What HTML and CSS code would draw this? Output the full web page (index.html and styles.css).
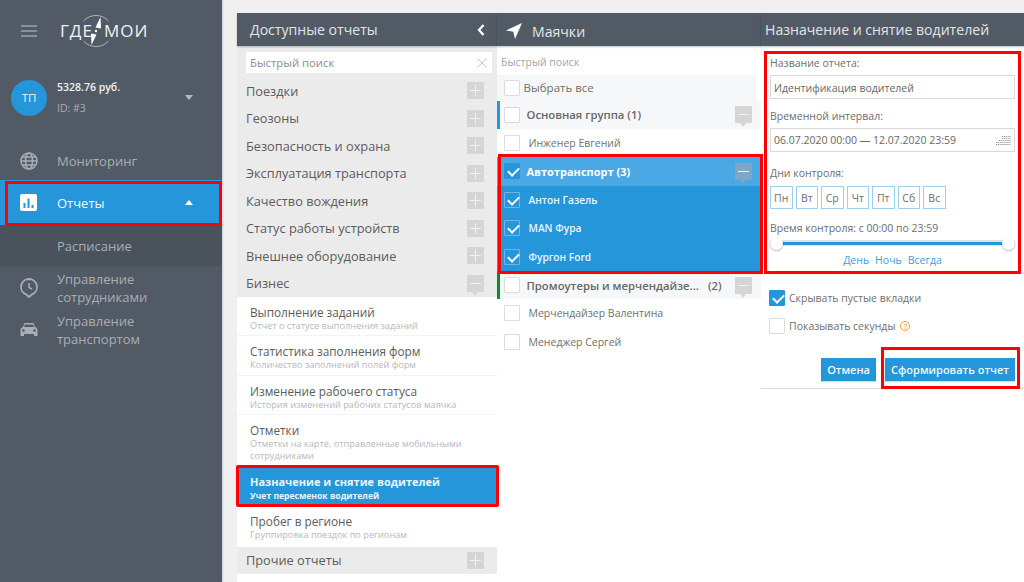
FILE: index.html
```html
<!DOCTYPE html>
<html lang="ru">
<head>
<meta charset="utf-8">
<title>Отчеты</title>
<link rel="stylesheet" href="styles.css">
</head>
<body>
<div class="app">
  <aside class="sidebar">
    <div class="brand">
      <svg class="burger" viewBox="0 0 16 12" width="16" height="12"><path d="M0 1h16M0 6h16M0 11h16" stroke="#c3c7cc" stroke-width="1.2"/></svg>
      <div class="logo">
        <span>ГДЕ</span>
        <svg class="compass" viewBox="0 0 34 36" width="34" height="36"><path d="M4.500 8A16.800 16.800 0 0 1 29.500 8M29.500 28A16.800 16.800 0 0 1 4.500 28" fill="none" stroke="#b7bbc0" stroke-width=".9"/><path d="M21.500 4l.5 11.500-5.500-1zM12.500 32l-.5-11.500 5.500 1z" fill="#fff"/><circle cx="17" cy="18" r="1.200" fill="#fff"/></svg>
        <span class="logo-b">МОИ</span>
      </div>
    </div>
    <div class="account">
      <div class="avatar">ТП</div>
      <div class="acc-text">
        <div class="balance">5328.76 руб.</div>
        <div class="acc-id">ID: #3</div>
      </div>
      <span class="caret-down"></span>
    </div>
    <nav class="nav">
      <div class="nav-item">
        <svg viewBox="0 0 18 18" width="18" height="18"><g fill="none" stroke="#a9aeb4" stroke-width="1.500"><circle cx="9" cy="9" r="8"/><ellipse cx="9" cy="9" rx="3.500" ry="8"/><path d="M1 9h16M2 5h14M2 13h14"/></g></svg>
        <span>Мониторинг</span>
      </div>
      <div class="nav-item active">
        <svg viewBox="0 0 18 18" width="18" height="18"><rect width="17" height="17" rx="2" fill="#fff"/><path d="M4.500 9v5M8.500 4.500V14M12.500 11v3" stroke="#2596da" stroke-width="2"/></svg>
        <span>Отчеты</span>
        <span class="caret-up"></span>
      </div>
      <div class="nav-sub">Расписание</div>
      <div class="nav-item double">
        <svg viewBox="0 0 18 20" width="18" height="20"><path d="M9 1a8 8 0 0 1 3 15.400L9 19l-3-2.600A8 8 0 0 1 9 1z" fill="none" stroke="#a9aeb4" stroke-width="1.800"/><path d="M9 5v4.500l3 1.500" fill="none" stroke="#a9aeb4" stroke-width="1.500"/></svg>
        <span>Управление<br>сотрудниками</span>
      </div>
      <div class="nav-item double">
        <svg viewBox="0 0 18 16" width="18" height="16"><path d="M3 5l1.500-4h9L15 5c1.500.5 2.500 1.500 2.500 3v6h-3.500v-2H4v2H.5V8C.5 6.500 1.500 5.500 3 5z" fill="#a9aeb4"/><path d="M5 2.500h8L14 5H4z" fill="#525b66"/><circle cx="3.500" cy="8.500" r="1.300" fill="#525b66"/><circle cx="14.500" cy="8.500" r="1.300" fill="#525b66"/></svg>
        <span>Управление<br>транспортом</span>
      </div>
    </nav>
  </aside>

  <main class="main">
    <section class="col col-reports">
      <header class="bar bar-reports">
        <h2>Доступные отчеты</h2>
        <svg viewBox="0 0 8 12" width="8" height="12"><path d="M6.500 1L2 6l4.500 5" fill="none" stroke="#fff" stroke-width="2.200"/></svg>
      </header>
      <div class="search-wrap">
        <div class="search"><span>Быстрый поиск</span><svg viewBox="0 0 10 10" width="10" height="10"><path d="M.5.5l9 9M9.500.5l-9 9" stroke="#c8c8c8"/></svg></div>
      </div>
      <div class="group"><span>Поездки</span><i class="tog plus"></i></div>
      <div class="group"><span>Геозоны</span><i class="tog plus"></i></div>
      <div class="group"><span>Безопасность и охрана</span><i class="tog plus"></i></div>
      <div class="group"><span>Эксплуатация транспорта</span><i class="tog plus"></i></div>
      <div class="group"><span>Качество вождения</span><i class="tog plus"></i></div>
      <div class="group"><span>Статус работы устройств</span><i class="tog plus"></i></div>
      <div class="group"><span>Внешнее оборудование</span><i class="tog plus"></i></div>
      <div class="group"><span>Бизнес</span><i class="tog minus"></i></div>
      <div class="report"><b>Выполнение заданий</b><small>Отчет о статусе выполнения заданий</small></div>
      <div class="report"><b>Статистика заполнения форм</b><small>Количество заполнений полей форм</small></div>
      <div class="report"><b>Изменение рабочего статуса</b><small>История изменений рабочих статусов маячка</small></div>
      <div class="report tall"><b>Отметки</b><small>Отметки на карте, отправленные мобильными сотрудниками</small></div>
      <div class="report selected"><b>Назначение и снятие водителей</b><small>Учет пересменок водителей</small></div>
      <div class="report last"><b>Пробег в регионе</b><small>Группировка поездок по регионам</small></div>
      <div class="group other"><span>Прочие отчеты</span><i class="tog plus"></i></div>
    </section>

    <section class="col col-beacons">
      <header class="bar bar-beacons">
        <svg viewBox="0 0 16 16" width="16" height="16"><path d="M16 0L0 7.500l7.300 1.200L9 16z" fill="#fff"/></svg>
        <h2>Маячки</h2>
      </header>
      <div class="b-search">Быстрый поиск</div>
      <div class="b-row all"><i class="check"></i><span>Выбрать все</span></div>
      <div class="b-row grp blue-edge"><i class="check"></i><b>Основная группа (1)</b><i class="tog minus"></i></div>
      <div class="b-row item"><i class="check"></i><span>Инженер Евгений</span></div>
      <div class="b-row grp on-head"><i class="check on"></i><b>Автотранспорт (3)</b><i class="tog minus"></i></div>
      <div class="b-row item on"><i class="check on"></i><span>Антон Газель</span></div>
      <div class="b-row item on"><i class="check on"></i><span>MAN Фура</span></div>
      <div class="b-row item on"><i class="check on"></i><span>Фургон Ford</span></div>
      <div class="b-row grp green-edge"><i class="check"></i><b>Промоутеры и мерчендайзе...</b><em>(2)</em><i class="tog minus"></i></div>
      <div class="b-row item"><i class="check"></i><span>Мерчендайзер Валентина</span></div>
      <div class="b-row item"><i class="check"></i><span>Менеджер Сергей</span></div>
    </section>

    <section class="col col-form">
      <header class="bar bar-form"><h2>Назначение и снятие водителей</h2></header>
      <div class="form">
        <label class="lbl">Название отчета:</label>
        <div class="field name">Идентификация водителей</div>
        <label class="lbl second">Временной интервал:</label>
        <div class="field date">
          <span>06.07.2020 00:00 — 12.07.2020 23:59</span>
          <svg viewBox="0 0 15 11" width="15" height="11"><path d="M6 1.500h9M6 3.500h9M3 5.500h12M0 7.500h15M0 9.500h15" stroke="#8f8f8f" stroke-dasharray="1.200 .9" fill="none"/></svg>
        </div>
        <label class="lbl days-lbl">Дни контроля:</label>
        <div class="days"><span>Пн</span><span>Вт</span><span>Ср</span><span>Чт</span><span>Пт</span><span>Сб</span><span>Вс</span></div>
        <label class="lbl time-lbl">Время контроля: с 00:00 по 23:59</label>
        <div class="slider"><i class="knob"></i><i class="knob"></i></div>
        <div class="links"><a>День</a><a>Ночь</a><a>Всегда</a></div>
      </div>
      <div class="opts">
        <div class="opt"><i class="check on"></i><span>Скрывать пустые вкладки</span></div>
        <div class="opt"><i class="check"></i><span>Показывать секунды</span><em class="help">?</em></div>
      </div>
      <div class="actions">
        <button class="btn">Отмена</button>
        <button class="btn">Сформировать отчет</button>
      </div>
    </section>
  </main>

  <div class="mark m-nav"></div>
  <div class="mark m-report"></div>
  <div class="mark m-beacons"></div>
  <div class="mark m-form"></div>
  <div class="mark m-submit"></div>
</div>
</body>
</html>
```
FILE: styles.css
```css
* { box-sizing: border-box; }
html, body { margin: 0; height: 100%; }
body { font-family: "Open Sans", "Noto Sans", sans-serif; color: #5f6469; overflow: hidden; background: #f0f0f0; }
.app { position: relative; display: flex; width: 1024px; height: 582px; overflow: hidden; }
i, em { font-style: normal; display: block; }

/* sidebar */
.sidebar { width: 222px; flex: none; background: #525b65; color: #a9aeb4; box-shadow: 1px 0 2px rgba(0,0,0,.12); }
.brand { display: flex; align-items: center; height: 61px; padding: 0 0 0 21px; }
.burger { flex: none; }
.logo { display: flex; align-items: center; margin-left: 23px; color: #f0f1f2; font-size: 17px; letter-spacing: 1px; font-weight: 400; }
.compass { margin-left: -14px; flex: none; }
.logo-b { margin-left: -9px; }
.account { display: flex; align-items: center; height: 73px; padding: 0 29px 0 11px; }
.avatar { width: 36px; height: 36px; border-radius: 50%; background: #2596da; color: #e9f4fb; display: flex; align-items: center; justify-content: center; font-size: 11.500px; }
.acc-text { margin-left: 10px; flex: 1; }
.balance { color: #f1f2f3; font-size: 10.500px; font-weight: 600; line-height: 15px; }
.acc-id { font-size: 10.500px; line-height: 15px; margin-top: 6px; color: #a9aeb4; }
.caret-down, .caret-up { width: 0; height: 0; border-left: 4.500px solid transparent; border-right: 4.500px solid transparent; }
.caret-down { border-top: 5px solid #b4b8bd; }
.caret-up { border-bottom: 5px solid #fff; margin-left: auto; margin-right: 3px; }
.nav { display: block; margin-top: 8px; }
.nav-item { display: flex; align-items: center; height: 38px; padding: 0 26px 0 20px; font-size: 13px; }
.nav-item svg { flex: none; margin-right: 19px; }
.nav-item.active { background: #2596da; color: #f4f9fd; height: 45px; }
.nav-sub { background: #4a525c; height: 41px; display: flex; align-items: center; padding-left: 57px; font-size: 13px; }
.nav-item.double { line-height: 18px; height: 42px; }
.nav-sub + .nav-item.double { margin-top: 1px; }

/* columns */
.main { flex: none; width: 802px; margin-left: 15px; margin-top: 13px; display: flex; align-items: flex-start; }
.col { flex: none; height: 569px; background: #fff; }
.col-reports { width: 260px; }
.col-beacons { width: 264px; }
.col-form { width: 278px; }
.bar { height: 33px; background: #525b65; color: #e3e5e7; display: flex; align-items: center; box-shadow: 0 1px 2px rgba(0,0,0,.25); position: relative; }
.bar h2 { margin: 0; font-size: 14.100px; font-weight: 400; }
.bar-reports { padding: 0 12px 0 13px; justify-content: space-between; }
.bar-beacons { padding-left: 9px; }
.bar-beacons svg { margin-top: 2px; }
.bar-beacons h2 { margin: 3px 0 0 10px; }
.bar-form { padding-left: 4px; }

/* reports */
.search-wrap { padding: 6px 5px 4px 9px; height: 31px; background: #ebebeb; }
.search { display: flex; justify-content: space-between; align-items: center; height: 21px; background: #fff; padding: 0 5px 0 4px; font-size: 11.300px; color: #8d8d8d; }
.group { display: flex; justify-content: space-between; align-items: center; height: 27.500px; padding: 0 13px 0 9px; font-size: 12.750px; font-weight: 500; color: #5c5c5c; background: #ebebeb; }
.tog { width: 17px; height: 17px; background: #d5d5d5; position: relative; flex: none; }
.tog::before { content: ""; position: absolute; left: 3px; right: 3px; top: 8px; height: 1px; background: #f2f2f2; }
.tog.plus::after { content: ""; position: absolute; top: 3px; bottom: 3px; left: 8px; width: 1px; background: #f2f2f2; }
.tog.minus::after { content: ""; position: absolute; left: 5px; bottom: -4px; border-left: 3.500px solid transparent; border-right: 3.500px solid transparent; border-top: 4px solid #d5d5d5; }
.report { background: #fff; padding: 8px 8px 0 13px; border-bottom: 1px solid #f3f3f3; height: 39.300px; overflow: hidden; }
.report b { display: block; font-size: 11.800px; font-weight: 500; line-height: 14px; color: #5c5c5c; }
.report small { display: block; font-size: 9.200px; font-weight: 500; line-height: 12px; margin-top: 1px; color: #b6b8bd; }
.report.tall { height: 52.100px; border-bottom: 0; }
.report.selected { background: #2596da; height: 39px; border-bottom: 0; }
.report.selected b, .report.selected small { color: #eaf5fc; font-weight: 700; }
.report.selected b { font-size: 11px; }
.report.selected small { font-size: 8.600px; }
.report.last { height: 41px; border-bottom: 0; }
.group.other { height: 27px; }

/* beacons */
.b-search { height: 29px; padding: 9px 0 0 4px; font-size: 10.500px; color: #a5a5a5; line-height: 14px; }
.b-row { display: flex; align-items: center; height: 28.400px; padding: 0 2px 0 6.500px; font-size: 10.500px; color: #6f6f6f; position: relative; }
.check { width: 16px; height: 16px; flex: none; background: #fff; border: 1px solid #dcdcdc; border-radius: 1px; position: relative; }
.check.on { background: #2596da; border-color: #2596da; }
.check.on::after { content: ""; position: absolute; left: 3px; top: 3px; width: 9px; height: 5px; border-left: 2px solid #fff; border-bottom: 2px solid #fff; transform: rotate(-45deg); }
.b-row.all { height: 25.500px; background: #f5f7f9; margin-right: 5px; font-size: 11.500px; }
.b-row.all span { margin-left: 4px; }
.b-row.grp { background: #f5f7f9; padding-right: 9px; }
.b-row.grp b { margin-left: 7px; font-weight: 600; font-size: 11.300px; flex: none; color: #686868; }
.b-row.grp .tog { margin-left: auto; }
.b-row.grp em { margin-left: 9px; font-size: 11.300px; font-weight: 600; color: #686868; }
.b-row.item span { margin-left: 9px; }
.blue-edge { box-shadow: inset 3px 0 0 #2596da; }
.green-edge { box-shadow: inset 3px 0 0 #0a8a2b; }
.b-row.on-head { background: #4aa9e4; }
.b-row.on-head b { color: #fff; font-weight: 700; font-size: 11px; }
.b-row.on-head .tog { background: #7fa6c4; }
.b-row.on-head .tog::after { border-top-color: #7fa6c4; }
.b-row.item.on { background: #2596da; color: #eaf5fc; font-weight: 600; font-size: 10.200px; }
.b-row.item .check.on { border-color: #69b8e8; }

/* form */
.form { padding: 10px 9px 0; width: 263px; }
.lbl { display: block; font-size: 10.500px; line-height: 14px; color: #6d6d6d; }
.field { height: 24px; margin-top: 5px; border: 1px solid #d8d8d8; display: flex; align-items: center; padding: 0 3px; font-size: 10.500px; color: #676767; }
.name { padding-top: 1px; }
.date { justify-content: space-between; }
.second { margin-top: 10px; }
.days-lbl { margin-top: 14px; }
.days { display: flex; gap: 3px; margin-top: 6px; }
.days span { width: 22.500px; height: 23px; border: 1px solid #9cd0ee; display: flex; align-items: center; justify-content: center; font-size: 10.500px; color: #6d6d6d; }
.time-lbl { margin-top: 12px; }
.slider { height: 14px; margin-top: 1px; display: flex; justify-content: space-between; align-items: center; background: linear-gradient(#2596da, #2596da) center / 100% 3px no-repeat, linear-gradient(#e0e0e0, #e0e0e0) center / 100% 6px no-repeat; }
.knob { width: 13px; height: 13px; border-radius: 50%; background: #fff; box-shadow: 0 1px 2px rgba(0,0,0,.3); }
.links { display: flex; justify-content: center; gap: 6px; font-size: 10.500px; line-height: 14px; color: #3aa0de; margin-top: 3px; }
.opts { padding: 17px 0 0 8px; }
.opt { display: flex; align-items: center; height: 28px; font-size: 10.500px; color: #6f6f6f; }
.opt span { margin-left: 4px; }
.help { width: 10px; height: 10px; border: 1px solid #f0a030; border-radius: 50%; color: #f0a030; font-size: 7.500px; line-height: 9px; text-align: center; margin-left: 5px; font-weight: 600; }
.actions { display: flex; justify-content: flex-end; gap: 9px; padding: 18px 9px 7px 0; width: 263px; border-bottom: 1px solid #dcdcdc; }
.btn { height: 23px; border: 0; background: #2596da; color: #f0f8fd; font-family: inherit; font-size: 11px; font-weight: 600; padding: 0 6px; box-shadow: 0 1px 1px rgba(0,0,0,.15); }

/* annotation frames */
.mark { position: absolute; border: 3px solid #fe0000; pointer-events: none; }
.m-nav { left: 5px; top: 181px; width: 217px; height: 45px; }
.m-report { left: 236px; top: 465px; width: 263px; height: 42px; border-radius: 2px; }
.m-beacons { left: 498px; top: 154px; width: 265px; height: 120px; }
.m-form { left: 764px; top: 51px; width: 257px; height: 223px; }
.m-submit { left: 881px; top: 347px; width: 139px; height: 42px; }
```
